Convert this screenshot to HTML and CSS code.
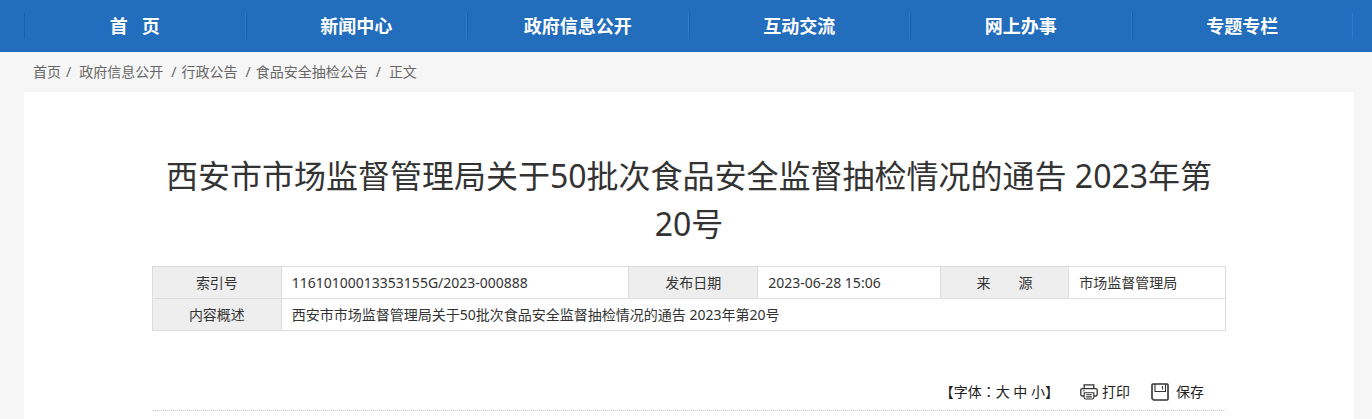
FILE: index.html
```html
<!DOCTYPE html>
<html lang="zh-CN">
<head>
  <meta charset="UTF-8">
  <title>西安市市场监督管理局关于50批次食品安全监督抽检情况的通告</title>
  <link rel="stylesheet" href="styles.css">
</head>
<body>
  <nav class="nav">
    <ul class="nav-list">
      <li><a href="#">首&nbsp;&nbsp; 页</a></li>
      <li><a href="#">新闻中心</a></li>
      <li><a href="#">政府信息公开</a></li>
      <li><a href="#">互动交流</a></li>
      <li><a href="#">网上办事</a></li>
      <li><a href="#">专题专栏</a></li>
    </ul>
  </nav>

  <div class="crumbs">
    <a href="#">首页</a><span>/</span>
    <a href="#" class="wide">政府信息公开</a><span class="wide">/</span>
    <a href="#">行政公告</a><span class="wide">/</span>
    <a href="#">食品安全抽检公告</a><span class="wide">/</span>
    <span class="wide">正文</span>
  </div>

  <div class="main">
    <h1 class="title">西安市市场监督管理局关于50批次食品安全监督抽检情况的通告 2023年第20号</h1>

    <table class="info">
      <colgroup>
        <col class="c-label"><col class="c-index">
        <col class="c-label"><col class="c-date">
        <col class="c-label"><col>
      </colgroup>
      <tr>
        <th scope="row">索引号</th>
        <td>11610100013353155G/2023-000888</td>
        <th scope="row">发布日期</th>
        <td>2023-06-28 15:06</td>
        <th scope="row">来&emsp;&emsp;源</th>
        <td>市场监督管理局</td>
      </tr>
      <tr>
        <th scope="row">内容概述</th>
        <td colspan="5">西安市市场监督管理局关于50批次食品安全监督抽检情况的通告 2023年第20号</td>
      </tr>
    </table>

    <div class="tools">
      <div>【字体<span class="colon" lang="zh-TW">：</span><button type="button">大</button> <button type="button">中</button> <button type="button">小</button>】</div>
      <button type="button" class="tool">
        <svg width="18" height="16" viewBox="0 0 18 16" fill="none" stroke="#333" stroke-width="1.3">
          <path d="M4.2 4.5V.8h9.6v3.7M4 12H2.2Q.8 12 .8 10.6V6Q.8 4.6 2.2 4.6h13.6Q17.2 4.6 17.2 6v4.6Q17.2 12 15.8 12H14"/>
          <path d="M4.2 8.7h9.6v4.8q0 1.5-1.5 1.5H5.7q-1.5 0-1.5-1.5zM2.8 6.7h1.8M6.2 10.8h5.600M6.2 12.900h5.600" stroke-width="1.1"/>
        </svg>
        打印
      </button>
      <button type="button" class="tool save">
        <svg width="18" height="18" viewBox="0 0 18 18" fill="none" stroke="#333">
          <path d="M1 2q0-1 1-1h14q1 0 1 1v14q0 1-1 1H2.5L1 15.5z" stroke-width="1.6"/>
          <path d="M4 1v7.500h10.500V1M11.500 3v3.500" stroke-width="1.1"/>
        </svg>
        保存
      </button>
    </div>
  </div>
</body>
</html>
```
FILE: styles.css
```css
body {
  margin: 0;
  background: #f6f6f6;
  color: #333;
  font-family: "Noto Sans", "Noto Sans CJK SC", sans-serif;
  font-size: 14px;
}

a {
  color: inherit;
  text-decoration: none;
}

button {
  padding: 0;
  border: 0;
  background: none;
  color: inherit;
  font: inherit;
  cursor: pointer;
}

.nav {
  padding: 0 19px 0 24px;
  background: #226dbc;
}

.nav-list {
  display: flex;
  margin: 0;
  padding: 13px 0;
  list-style: none;
}

.nav-list li {
  flex: 1;
  border-left: 1px solid #1c5fa6;
  border-right: 1px solid #2d7bd0;
  color: #fff;
  font-size: 18px;
  font-weight: bold;
  line-height: 26px;
  text-align: center;
}

.nav-list a {
  display: block;
}

.crumbs {
  display: flex;
  gap: 5px;
  padding: 0 33px;
  color: #666;
  line-height: 40px;
}

.crumbs .wide {
  margin-left: 3px;
}

.main {
  margin: 0 18px 0 24px;
  padding: 60px 128px 9px;
  background: #fff;
}

.title {
  margin: 0 0 18px;
  font-size: 32px;
  font-weight: normal;
  line-height: 48px;
  text-align: center;
}

.info {
  width: 100%;
  border-collapse: collapse;
  table-layout: fixed;
}

.info th,
.info td {
  height: 31px;
  padding: 0 10px;
  border: 1px solid #dcdcdc;
  line-height: 20px;
  text-align: left;
}

.info th {
  background: #eee;
  font-weight: normal;
  text-align: center;
}

.c-label {
  width: 12%;
}

.c-index {
  width: 32.4%;
}

.c-date {
  width: 17%;
}

.tools {
  display: flex;
  justify-content: flex-end;
  align-items: center;
  margin-top: 42px;
  padding-right: 22px;
  border-bottom: 1px dotted #ccc;
  color: #222;
  line-height: 36px;
}

/* full-width colon centred in its cell */
.colon {
  font-family: "Noto Sans CJK TC", sans-serif;
}

.tool {
  display: flex;
  align-items: center;
  gap: 4px;
  margin-left: 21px;
}

.save {
  gap: 7px;
}
```
